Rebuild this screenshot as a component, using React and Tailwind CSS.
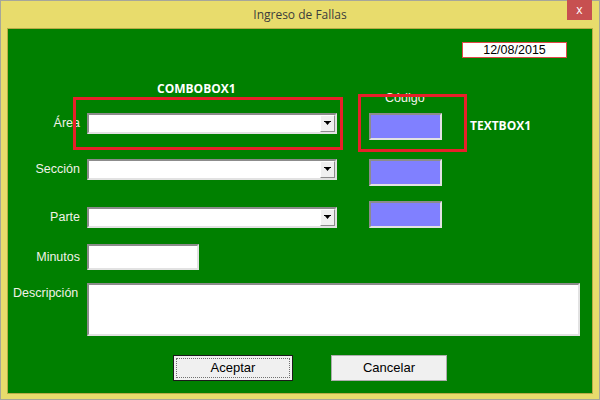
const label = "font-['Liberation_Sans',Arial,sans-serif] text-[12.5px] text-[#f2f2e8]"
const sunken =
  "border-2 border-t-[#8c8c8c] border-l-[#8c8c8c] border-r-[#e2e2e2] border-b-[#e2e2e2]"

function Combo() {
  return (
    <div className={`flex h-[21px] w-[250px] items-stretch justify-end bg-white ${sunken}`}>
      <div className="flex w-[15px] items-center justify-center border border-t-white border-l-white border-r-[#8c8c8c] border-b-[#8c8c8c] bg-[#f0f0f0]">
        <svg width="7" height="5" viewBox="0 0 7 5">
          <path d="M0 0h7v1H0zM1 1h5l-2.5 3z" fill="#000" />
        </svg>
      </div>
    </div>
  )
}

function Code() {
  return <div className={`h-[27px] w-[73px] bg-[#8080ff] ${sunken}`} />
}

export default function App() {
  return (
    <div className="flex h-[400px] w-[600px] flex-col border border-[#a6a69a] bg-[#e8dc6c]">
      <div className="relative flex h-[27px] shrink-0 items-center justify-center">
        <span className="font-['Open_Sans',sans-serif] text-[12px] text-[#3c3c3c]">Ingreso de Fallas</span>
        <div className="absolute right-[7px] top-[-1px] flex h-[20px] w-[25px] items-center justify-center bg-[#c75050] font-['Open_Sans',sans-serif] text-[12px] text-white">
          x
        </div>
      </div>
      <div className="relative mx-[6px] h-[366px] border border-[#b8ac48] bg-[#008000]">
        {/* fecha */}
        <div className="flex justify-end pr-[25px] pt-[13px]">
          <div className="flex h-[16px] w-[105px] items-center justify-center border border-[#e04848] bg-white font-['Liberation_Sans',Arial,sans-serif] text-[12.5px] text-black">
            12/08/2015
          </div>
        </div>

        <div className="mt-[55px] flex items-start">
          <div className={`flex h-[21px] w-[72px] items-center justify-end ${label}`}>Área</div>
          <div className="ml-[7px]"><Combo /></div>
          <div className="ml-[32px]"><Code /></div>
        </div>

        <div className="mt-[19px] flex items-start">
          <div className={`flex h-[21px] w-[72px] items-center justify-end ${label}`}>Sección</div>
          <div className="ml-[7px]"><Combo /></div>
          <div className="ml-[32px]"><Code /></div>
        </div>

        <div className="mt-[15px] flex items-end">
          <div className={`flex h-[21px] w-[72px] items-center justify-end ${label}`}>Parte</div>
          <div className="ml-[7px]"><Combo /></div>
          <div className="ml-[32px]"><Code /></div>
        </div>

        <div className="mt-[16px] flex items-center">
          <div className={`w-[72px] text-right ${label}`}>Minutos</div>
          <div className={`ml-[7px] h-[26px] w-[112px] bg-white ${sunken}`} />
        </div>

        <div className="mt-[13px] flex items-start">
          <div className={`w-[72px] pl-[5px] pt-[1px] ${label}`}>Descripción</div>
          <div className={`ml-[7px] h-[53px] w-[493px] bg-white ${sunken}`} />
        </div>

        <div className="mt-[19px] flex pl-[165px]">
          <div className="flex h-[26px] w-[120px] items-center justify-center border border-[#1a1a1a] bg-[#f0f0f0] p-[2px]">
            <div className="flex h-full w-full items-center justify-center border border-dotted border-[#707070] font-['Liberation_Sans',Arial,sans-serif] text-[13px] text-black">
              Aceptar
            </div>
          </div>
          <div className="ml-[38px] flex h-[26px] w-[116px] items-center justify-center border border-[#adadad] bg-[#f0f0f0] font-['Liberation_Sans',Arial,sans-serif] text-[13px] text-black">
            Cancelar
          </div>
        </div>

        {/* anotaciones */}
        <div className="absolute left-[149px] top-[51px] font-['Open_Sans',sans-serif] text-[12px] font-bold text-white">
          COMBOBOX1
        </div>
        <div className={`absolute left-[377px] top-[60px] ${label}`}>Código</div>
        <div className="absolute left-[65px] top-[68px] h-[53px] w-[270px] border-[3px] border-[#e8202a]" />
        <div className="absolute left-[350px] top-[65px] h-[58px] w-[109px] border-[3px] border-[#e8202a]" />
        <div className="absolute left-[462px] top-[88px] font-['Open_Sans',sans-serif] text-[12px] font-bold text-white">
          TEXTBOX1
        </div>
      </div>
    </div>
  )
}
